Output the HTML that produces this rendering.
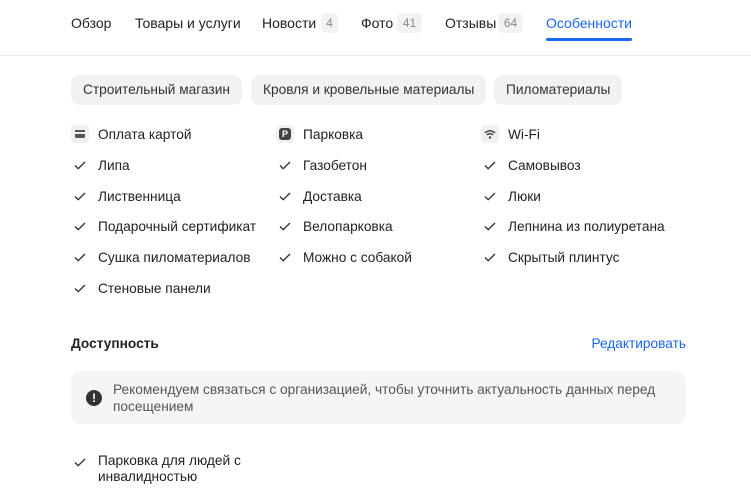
<!DOCTYPE html>
<html><head><meta charset="utf-8"><style>
body{margin:0;width:751px;height:490px;background:#fff;font-family:"Liberation Sans",sans-serif;color:#222;position:relative;overflow:hidden}
.a{position:absolute;white-space:nowrap}
.t{font-size:14px;top:15px}
.b{position:absolute;top:13px;height:20px;background:#f2f2f2;border-radius:5px;color:#888;font-size:12px;line-height:20px;text-align:center}
.chip{position:absolute;top:75px;height:30px;line-height:30px;background:#f2f2f2;border-radius:9px;font-size:13.7px;color:#333;padding:0 12px;white-space:nowrap}
.it{position:absolute;font-size:13.7px;line-height:17px;white-space:nowrap}
.ck{position:absolute;width:14px;height:14px}
.ic{position:absolute;width:18px;height:18px;background:#f0f0f0;border-radius:4px}
</style></head><body>
<div class="a t" style="left:71px">Обзор</div>
<div class="a t" style="left:135px">Товары и услуги</div>
<div class="a t" style="left:262px">Новости</div><div class="b" style="left:321px;width:17px">4</div>
<div class="a t" style="left:361px">Фото</div><div class="b" style="left:397px;width:25px">41</div>
<div class="a t" style="left:445px">Отзывы</div><div class="b" style="left:498px;width:25px">64</div>
<div class="a t" style="left:546px;color:#1a66f0">Особенности</div>
<div class="a" style="left:546px;top:38px;width:86px;height:3px;border-radius:2px;background:#1a66f0"></div>
<div class="a" style="left:0;top:55px;width:751px;height:1px;background:#ebebeb"></div>
<div class="chip" style="left:71px">Строительный магазин</div>
<div class="chip" style="left:251px">Кровля и кровельные материалы</div>
<div class="chip" style="left:494px">Пиломатериалы</div>

<div class="ic" style="left:71px;top:125px"><div style="position:absolute;left:4px;top:5px;width:10px;height:8px;background:#555;border-radius:1px"></div><div style="position:absolute;left:4px;top:7px;width:10px;height:1.5px;background:#f0f0f0"></div></div>
<div class="it" style="left:98px;top:126px">Оплата картой</div>
<div class="ic" style="left:276px;top:125px"><div style="position:absolute;left:3px;top:3px;width:12px;height:12px;background:#444;border-radius:3px;color:#fff;font-size:9px;font-weight:bold;line-height:12px;text-align:center">P</div></div>
<div class="it" style="left:303px;top:126px">Парковка</div>
<div class="ic" style="left:481px;top:125px"><svg width="18" height="18" viewBox="0 0 18 18"><path d="M4 8a7 7 0 0 1 10 0M6 10a4 4 0 0 1 6 0" stroke="#444" stroke-width="1.5" fill="none"/><circle cx="9" cy="12.5" r="1.2" fill="#444"/></svg></div>
<div class="it" style="left:508px;top:126px">Wi-Fi</div>

<svg width="0" height="0" style="position:absolute"><defs><path id="c" d="M2 7.5l3.2 3.2L12 4" stroke="#333" stroke-width="1.4" fill="none"/></defs></svg>
<svg class="ck" style="left:73px;top:158px"><use href="#c"/></svg><div class="it" style="left:98px;top:157px">Липа</div>
<svg class="ck" style="left:73px;top:189px"><use href="#c"/></svg><div class="it" style="left:98px;top:188px">Лиственница</div>
<svg class="ck" style="left:73px;top:219px"><use href="#c"/></svg><div class="it" style="left:98px;top:218px">Подарочный сертификат</div>
<svg class="ck" style="left:73px;top:250px"><use href="#c"/></svg><div class="it" style="left:98px;top:249px">Сушка пиломатериалов</div>
<svg class="ck" style="left:73px;top:281px"><use href="#c"/></svg><div class="it" style="left:98px;top:280px">Стеновые панели</div>
<svg class="ck" style="left:278px;top:158px"><use href="#c"/></svg><div class="it" style="left:303px;top:157px">Газобетон</div>
<svg class="ck" style="left:278px;top:189px"><use href="#c"/></svg><div class="it" style="left:303px;top:188px">Доставка</div>
<svg class="ck" style="left:278px;top:219px"><use href="#c"/></svg><div class="it" style="left:303px;top:218px">Велопарковка</div>
<svg class="ck" style="left:278px;top:250px"><use href="#c"/></svg><div class="it" style="left:303px;top:249px">Можно с собакой</div>
<svg class="ck" style="left:483px;top:158px"><use href="#c"/></svg><div class="it" style="left:508px;top:157px">Самовывоз</div>
<svg class="ck" style="left:483px;top:189px"><use href="#c"/></svg><div class="it" style="left:508px;top:188px">Люки</div>
<svg class="ck" style="left:483px;top:219px"><use href="#c"/></svg><div class="it" style="left:508px;top:218px">Лепнина из полиуретана</div>
<svg class="ck" style="left:483px;top:250px"><use href="#c"/></svg><div class="it" style="left:508px;top:249px">Скрытый плинтус</div>

<div class="it" style="left:71px;top:335px;font-weight:bold">Доступность</div>
<div class="it" style="right:65px;top:335px;color:#1a66f0">Редактировать</div>
<div class="a" style="left:71px;top:371px;width:615px;height:53px;background:#f5f5f5;border-radius:10px"></div>
<div class="a" style="left:86px;top:390px;width:16px;height:16px;border-radius:50%;background:#333;color:#fff;font-size:12px;font-weight:bold;line-height:16px;text-align:center">!</div>
<div class="it" style="left:113px;top:381px;color:#555">Рекомендуем связаться с организацией, чтобы уточнить актуальность данных перед<br>посещением</div>
<svg class="ck" style="left:73px;top:455px"><use href="#c"/></svg><div class="it" style="left:98px;top:453px;line-height:16px">Парковка для людей с<br>инвалидностью</div>
</body></html>
